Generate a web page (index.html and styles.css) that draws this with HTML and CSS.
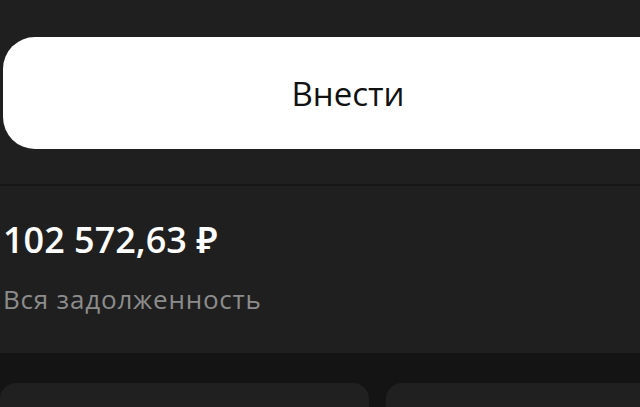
FILE: index.html
```html
<!DOCTYPE html>
<html lang="ru">
<head>
  <meta charset="UTF-8">
  <title>Задолженность</title>
  <meta name="viewport" content="width=device-width, initial-scale=1.0"/>
  <link rel="stylesheet" href="styles.css">
</head>
<body>
  <div class="screen">
    <div class="top">
      <button class="pay-btn">Внести</button>
    </div>
    <div class="debt">
      <div class="amount">102 572,63 ₽</div>
      <div class="caption">Вся задолженность</div>
    </div>
    <div class="gap"></div>
    <div class="cards">
      <div class="card"></div>
      <div class="card"></div>
    </div>
  </div>
</body>
</html>
```

FILE: styles.css
```css
html, body { margin: 0; padding: 0; background: #1f1f1f; overflow: hidden; }
body { font-family: "Open Sans", "Noto Sans", sans-serif; color: #fff; }
.screen { width: 700px; }
.top { padding: 37px 0 35px 3px; border-bottom: 2px solid #161616; }
.pay-btn { display: block; width: 690px; height: 112px; border: 0; border-radius: 32px; background: #fff; color: #111; font-family: inherit; font-size: 33px; padding: 0; }
.debt { padding: 34px 4px 0 3px; height: 167px; box-sizing: border-box; }
.amount { font-size: 36px; font-weight: 600; line-height: 40px; }
.caption { margin-top: 24px; font-size: 26px; line-height: 30px; color: #8c8c8c; letter-spacing: 0.8px; }
.gap { height: 30px; background: #141414; }
.cards { display: flex; gap: 17px; background: #141414; }
.card { height: 24px; background: #202020; border-radius: 16px 16px 0 0; }
.card:first-child { width: 369px; }
.card:last-child { flex: 1; }
```
